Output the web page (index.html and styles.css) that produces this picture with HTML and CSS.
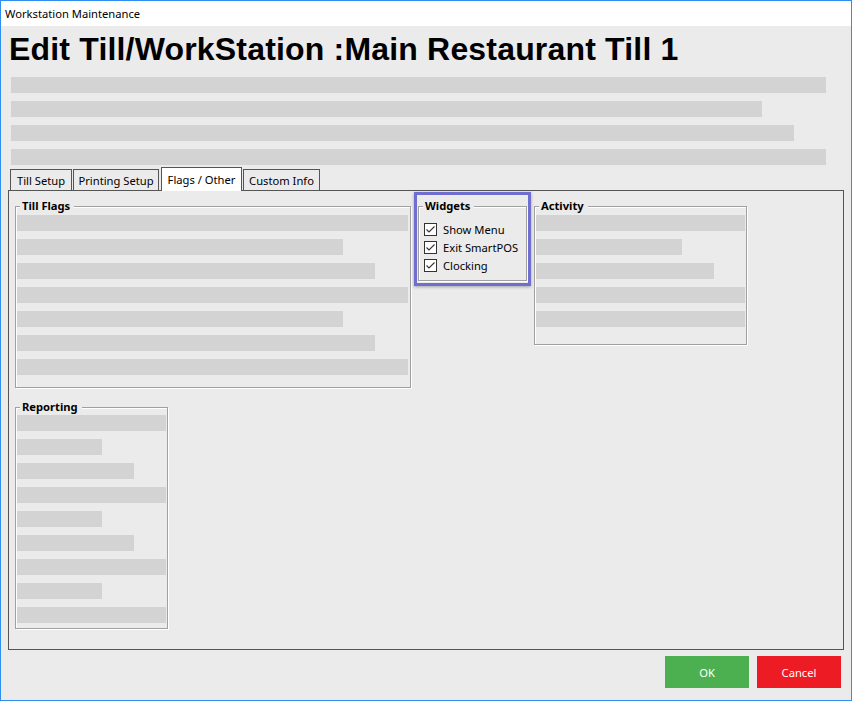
FILE: index.html
```html
<!DOCTYPE html>
<html>
<head>
<meta charset="utf-8">
<title>Workstation Maintenance</title>
<link rel="stylesheet" href="styles.css">
</head>
<body>
<div class="window">
  <div class="titlebar">Workstation Maintenance</div>
  <div class="content">
    <h1 class="heading">Edit Till/WorkStation :Main Restaurant Till 1</h1>
    <div class="header-bars">
      <div class="bar hb-full"></div>
      <div class="bar hb-2"></div>
      <div class="bar hb-3"></div>
      <div class="bar hb-full"></div>
    </div>
    <div class="tabs">
      <div class="tab t1">Till Setup</div>
      <div class="tab t2">Printing Setup</div>
      <div class="tab t3 selected">Flags / Other</div>
      <div class="tab t4">Custom Info</div>
    </div>
    <div class="panel">
      <div class="col-left">
        <fieldset class="group flags">
          <legend>Till Flags</legend>
          <div class="bars">
            <div class="bar f-full"></div>
            <div class="bar f-a"></div>
            <div class="bar f-b"></div>
            <div class="bar f-full"></div>
            <div class="bar f-a"></div>
            <div class="bar f-b"></div>
            <div class="bar f-full"></div>
          </div>
        </fieldset>
        <fieldset class="group reporting">
          <legend>Reporting</legend>
          <div class="bars">
            <div class="bar r-full"></div>
            <div class="bar r-a"></div>
            <div class="bar r-b"></div>
            <div class="bar r-full"></div>
            <div class="bar r-a"></div>
            <div class="bar r-b"></div>
            <div class="bar r-full"></div>
            <div class="bar r-a"></div>
            <div class="bar r-full"></div>
          </div>
        </fieldset>
      </div>
      <div class="widgets-wrap">
        <fieldset class="group widgets">
          <legend>Widgets</legend>
          <div class="check">
            <svg class="cb" width="13" height="13" viewBox="0 0 13 13"><rect x="0.5" y="0.5" width="12" height="12" fill="#fff" stroke="#333"/><polyline points="2.5,6.5 5,9 10.5,3.5" fill="none" stroke="#333" stroke-width="1.1"/></svg>
            <span>Show Menu</span>
          </div>
          <div class="check">
            <svg class="cb" width="13" height="13" viewBox="0 0 13 13"><rect x="0.5" y="0.5" width="12" height="12" fill="#fff" stroke="#333"/><polyline points="2.5,6.5 5,9 10.5,3.5" fill="none" stroke="#333" stroke-width="1.1"/></svg>
            <span>Exit SmartPOS</span>
          </div>
          <div class="check">
            <svg class="cb" width="13" height="13" viewBox="0 0 13 13"><rect x="0.5" y="0.5" width="12" height="12" fill="#fff" stroke="#333"/><polyline points="2.5,6.5 5,9 10.5,3.5" fill="none" stroke="#333" stroke-width="1.1"/></svg>
            <span>Clocking</span>
          </div>
        </fieldset>
        <div class="highlight"></div>
      </div>
      <fieldset class="group activity">
        <legend>Activity</legend>
        <div class="bars">
          <div class="bar a-full"></div>
          <div class="bar a-a"></div>
          <div class="bar a-b"></div>
          <div class="bar a-full"></div>
          <div class="bar a-full"></div>
        </div>
      </fieldset>
    </div>
    <div class="buttons">
      <button class="btn ok">OK</button>
      <button class="btn cancel">Cancel</button>
    </div>
  </div>
</div>
</body>
</html>
```
FILE: styles.css
```css
html, body {
  margin: 0;
  padding: 0;
  background: #ebebeb;
}

.window {
  width: 852px;
  height: 701px;
  box-sizing: border-box;
  border: 1px solid #2f8ff0;
  background: #ebebeb;
  display: flex;
  flex-direction: column;
  font-family: "Noto Sans", "Liberation Sans", sans-serif;
  font-size: 11.2px;
  color: #000;
}

.titlebar {
  height: 25px;
  line-height: 25px;
  background: #fff;
  padding-left: 4px;
  white-space: nowrap;
}

.content {
  flex: 1;
  padding: 5px 7px 0 7px;
  display: flex;
  flex-direction: column;
}

.heading {
  margin: 0 0 0 1px;
  font-family: "Liberation Sans", Arial, sans-serif;
  font-weight: bold;
  font-size: 32px;
  line-height: 36px;
  letter-spacing: 0.18px;
  white-space: nowrap;
}

.header-bars {
  margin: 10px 0 0 3px;
  display: flex;
  flex-direction: column;
  gap: 8px;
}

.bar {
  height: 16px;
  background: #d3d3d3;
}

.hb-full { width: 815px; }
.hb-2 { width: 751px; }
.hb-3 { width: 783px; }

/* Tabs */
.tabs {
  margin-top: 2px;
  height: 23px;
  padding-left: 2px;
  display: flex;
  align-items: flex-end;
}

.tab {
  box-sizing: border-box;
  height: 21px;
  border: 1px solid #555;
  border-bottom: none;
  background: #ebebeb;
  display: flex;
  align-items: center;
  justify-content: center;
  white-space: nowrap;
}

.t1 { width: 62px; }
.t2 { width: 86px; margin-left: 1px; }
.t3 { width: 81px; margin-left: 2px; }
.t4 { width: 77px; margin-left: 1px; }

.tab.selected {
  height: 24px;
  margin-bottom: -1px;
  background: #fff;
  position: relative;
  z-index: 1;
  padding-bottom: 1px;
}

/* Panel */
.panel {
  box-sizing: border-box;
  width: 836px;
  height: 460px;
  border: 1px solid #555;
  padding: 8px 0 0 6px;
  display: flex;
  align-items: flex-start;
  gap: 7px;
}

.col-left {
  display: flex;
  flex-direction: column;
  gap: 12px;
}

.group {
  margin: 0;
  min-width: 0;
  box-sizing: border-box;
  border: 1px solid #a0a0a0;
  box-shadow: inset 1px 1px 0 #fff, 1px 1px 0 #fff;
  padding: 2px 2px 12px 1px;
}

.group legend {
  font-weight: bold;
  font-size: 11.2px;
  line-height: 14px;
  padding: 0 4px 0 2px;
  margin-left: 3px;
  background: #ebebeb;
  white-space: nowrap;
}

.bars {
  display: flex;
  flex-direction: column;
  gap: 8px;
}

.flags { width: 396px; }
.f-full { width: 391px; }
.f-a { width: 326px; }
.f-b { width: 358px; }

.reporting {
  width: 153px;
  padding-top: 1px;
  padding-bottom: 5px;
}
.r-full { width: 149px; }
.r-a { width: 85px; }
.r-b { width: 117px; }

.activity {
  width: 213px;
  padding-bottom: 17px;
}
.a-full { width: 209px; }
.a-a { width: 146px; }
.a-b { width: 178px; }

/* Widgets */
.widgets-wrap {
  position: relative;
}

.widgets {
  width: 109px;
  padding: 7px 2px 6px 5px;
}

.widgets legend {
  margin-left: -1px;
}

.check {
  height: 18px;
  display: flex;
  align-items: center;
  gap: 6px;
  white-space: nowrap;
}

.cb {
  display: block;
  flex: none;
}

.highlight {
  position: absolute;
  left: -4px;
  right: -4px;
  top: -7px;
  bottom: -5px;
  border: 3px solid #6f6fd2;
  box-shadow: 0 1px 3px rgba(0, 0, 0, 0.3);
  pointer-events: none;
}

/* Buttons */
.buttons {
  margin-top: 6px;
  margin-right: 3px;
  display: flex;
  justify-content: flex-end;
  gap: 8px;
}

.btn {
  width: 84px;
  height: 32px;
  border: none;
  padding: 0;
  color: #fff;
  font-family: "Noto Sans", "Liberation Sans", sans-serif;
  font-size: 11.2px;
}

.ok { background: #4caf50; }
.cancel { background: #ed1c24; }
```
